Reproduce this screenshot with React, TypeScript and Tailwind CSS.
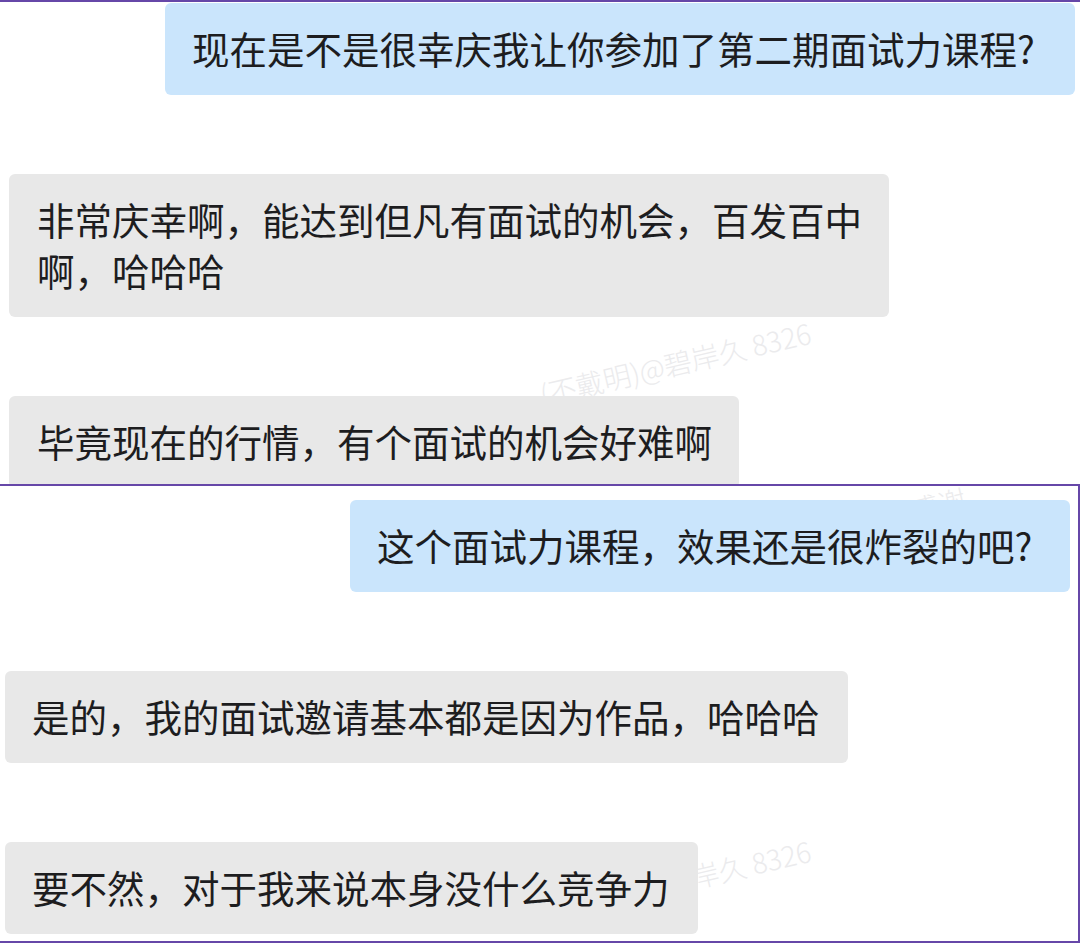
import React from "react";

const font = { fontFamily: '"Noto Sans CJK SC", "Noto Sans", sans-serif' };

function Watermark({ text, className }: { text: string; className: string }) {
  return (
    <div
      className={`pointer-events-none absolute z-0 whitespace-nowrap text-[28px] font-light leading-none text-[#ebebed] -rotate-[13deg] origin-left ${className}`}
    >
      {text}
    </div>
  );
}

function Bubble({
  children,
  mine,
  className,
}: {
  children: React.ReactNode;
  mine?: boolean;
  className: string;
}) {
  return (
    <div
      className={`rounded-md pt-[19px] pb-[22px] whitespace-nowrap ${
        mine ? "self-end bg-[#cae5fc]" : "self-start bg-[#e8e8e8]"
      } ${className}`}
    >
      {children}
    </div>
  );
}

export default function App() {
  return (
    <div
      className="relative w-[1080px] h-[944px] overflow-hidden bg-white text-[37.5px] leading-[51px] text-[#1d1d1f]"
      style={font}
    >
      {/* upper screenshot */}
      <div className="relative h-[484px] overflow-hidden border-t-2 border-[#6647a8]">
        <Watermark text="(不戴明)@碧岸久 8326" className="left-[540px] top-[378px]" />
        <div className="relative z-10 flex flex-col gap-[79px] pt-[1px] pl-[9px] pr-[5px]">
          <Bubble mine className="w-[910px] pl-[27px]">
            现在是不是很幸庆我让你参加了第二期面试力课程?
          </Bubble>
          <Bubble className="w-[880px] pl-[28px]">
            <div>非常庆幸啊，能达到但凡有面试的机会，百发百中</div>
            <div>啊，哈哈哈</div>
          </Bubble>
          <Bubble className="w-[730px] pl-[28px]">毕竟现在的行情，有个面试的机会好难啊</Bubble>
        </div>
      </div>

      {/* lower screenshot */}
      <div className="relative h-[459px] overflow-hidden border-t-2 border-r-2 border-b-2 border-[#6647a8] bg-white">
        <Watermark text="面试  感谢" className="left-[850px] top-[24px]" />
        <Watermark text="(不戴明)@碧岸久 8326" className="left-[540px] top-[412px]" />
        <div className="relative z-10 flex flex-col gap-[79px] pt-[14px] pl-[5px] pr-[8px]">
          <Bubble mine className="w-[720px] pl-[27px]">
            这个面试力课程，效果还是很炸裂的吧?
          </Bubble>
          <Bubble className="w-[843px] pl-[27px]">是的，我的面试邀请基本都是因为作品，哈哈哈</Bubble>
          <Bubble className="w-[693px] pl-[27px]">要不然，对于我来说本身没什么竞争力</Bubble>
        </div>
      </div>
    </div>
  );
}
